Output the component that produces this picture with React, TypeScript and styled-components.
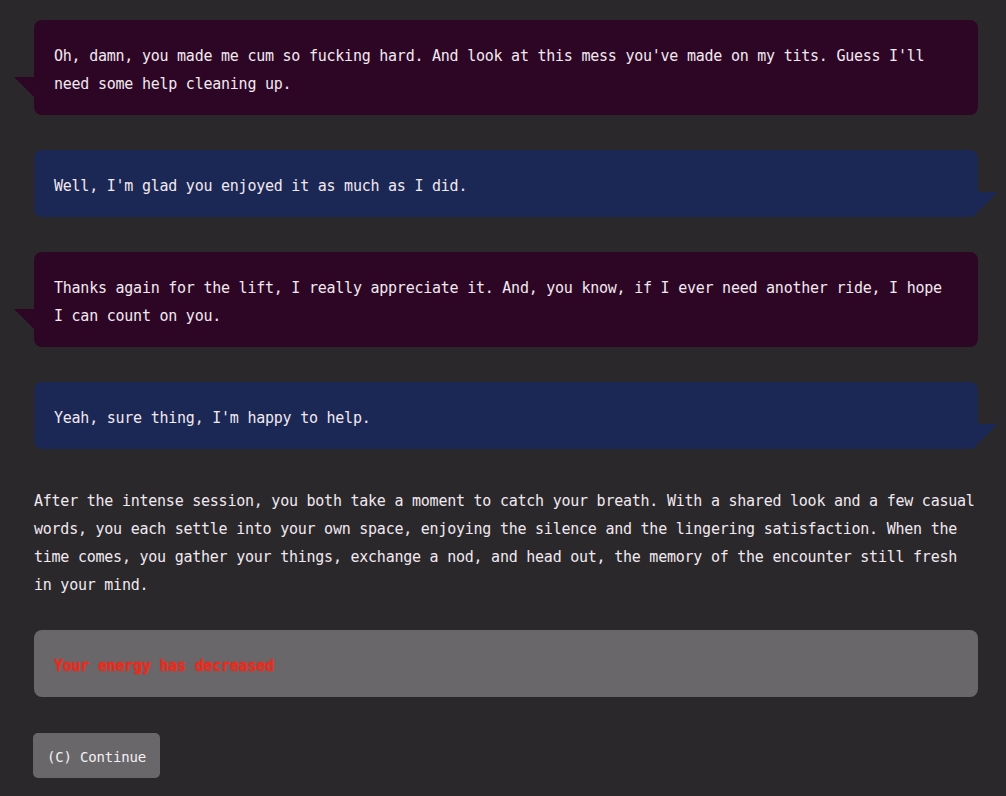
import React from "react"
import styled, { createGlobalStyle } from "styled-components"

const GlobalStyle = createGlobalStyle`
  html, body {
    margin: 0;
    padding: 0;
    background: #2a282b;
  }
  body {
    font-family: "DejaVu Sans Mono", "Liberation Mono", monospace;
    font-size: 15px;
    letter-spacing: -0.24px;
    line-height: 28px;
    color: #f1e9f0;
  }
`

type Side = "left" | "right"

const lines: { side: Side; text: string }[] = [
  {
    side: "left",
    text: "Oh, damn, you made me cum so fucking hard. And look at this mess you've made on my tits. Guess I'll need some help cleaning up.",
  },
  { side: "right", text: "Well, I'm glad you enjoyed it as much as I did." },
  {
    side: "left",
    text: "Thanks again for the lift, I really appreciate it. And, you know, if I ever need another ride, I hope I can count on you.",
  },
  { side: "right", text: "Yeah, sure thing, I'm happy to help." },
]

export default function App() {
  return (
    <>
      <GlobalStyle />
      <S.Page>
        {lines.map((l, i) => (
          <S.Bubble key={i} side={l.side}>
            {l.text}
          </S.Bubble>
        ))}
        <S.Narration>
          After the intense session, you both take a moment to catch your breath. With a shared look and a few casual
          words, you each settle into your own space, enjoying the silence and the lingering satisfaction. When the
          time comes, you gather your things, exchange a nod, and head out, the memory of the encounter still fresh
          in your mind.
        </S.Narration>
        <S.Notice>Your energy has decreased</S.Notice>
        <S.Actions>
          <S.Button>(C) Continue</S.Button>
        </S.Actions>
      </S.Page>
    </>
  )
}

const S = {
  Page: styled.div`
    display: flex;
    flex-direction: column;
    padding: 20px 28px 18px 34px;
  `,

  Bubble: styled.div<{ side: Side }>`
    position: relative;
    padding: 22px 20px 17px;
    margin-bottom: 35px;
    border-radius: 8px;
    background: ${(p) => (p.side === "left" ? "#2e0625" : "#1b2754")};

    &::before {
      content: "";
      position: absolute;
      width: 0;
      height: 0;
      border-top: 20px solid ${(p) => (p.side === "left" ? "#2e0625" : "#1b2754")};
      ${(p) =>
        p.side === "left"
          ? `left: -20px; bottom: 18px; border-left: 20px solid transparent;`
          : `right: -20px; bottom: 5px; border-right: 20px solid transparent;`}
    }
  `,

  Narration: styled.p`
    margin: 0;
    padding-top: 3px;
  `,

  Notice: styled.div`
    margin-top: 31px;
    padding: 22px 20px 17px;
    border-radius: 8px;
    background: #69676a;
    color: #ec2a1c;
    font-weight: bold;
    text-shadow: 0 0 2px rgba(236, 42, 28, 0.7);
  `,

  Actions: styled.div`
    margin-top: 36px;
    margin-left: -1px;
  `,

  Button: styled.button`
    font-family: inherit;
    font-size: 14px;
    letter-spacing: -0.18px;
    color: #f4f0f4;
    background: #69676a;
    border: none;
    border-radius: 5px;
    height: 45px;
    padding: 2px 14px 0;
    cursor: pointer;
  `,
}
